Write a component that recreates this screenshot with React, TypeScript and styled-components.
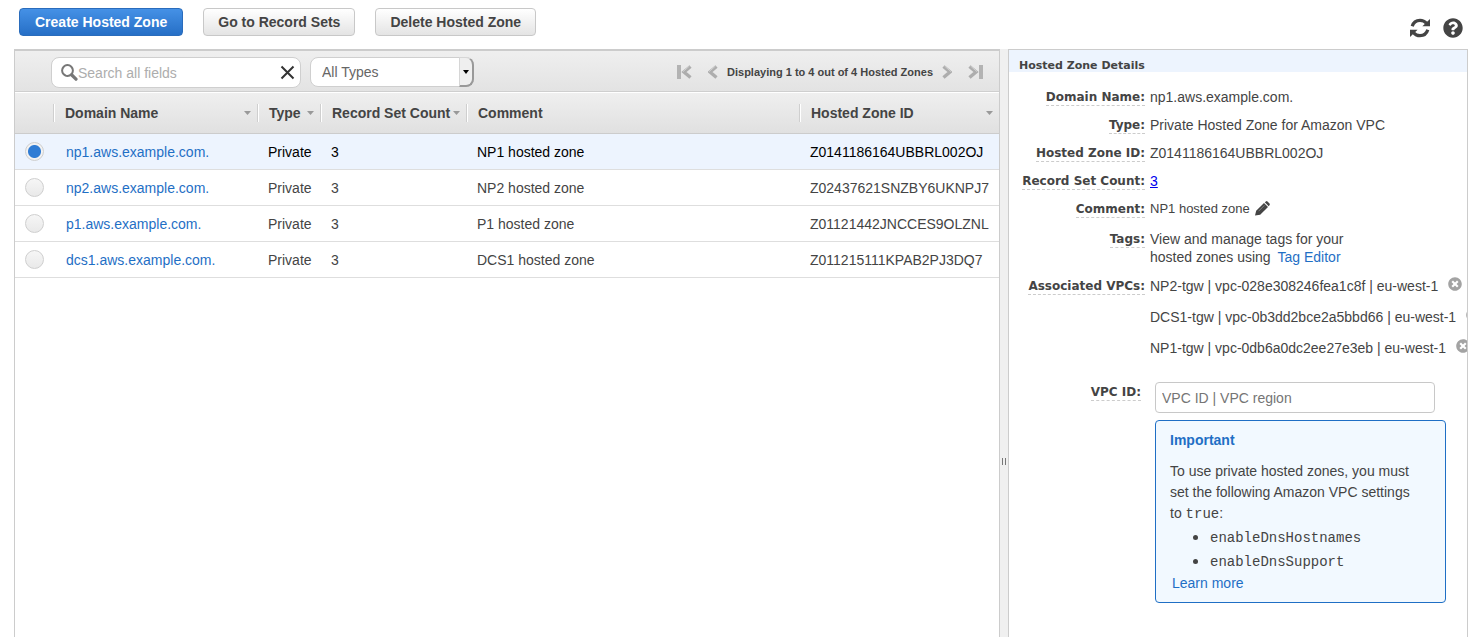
import React, { useState } from "react";
import styled, { createGlobalStyle, css } from "styled-components";
import { FaQuestionCircle, FaTimesCircle } from "react-icons/fa";

const colors = {
  text: "#444444",
  blue: "#1f6fc5",
  line: "#cccccc",
  pale: "#edf4fe",
};

const GlobalStyle = createGlobalStyle`
  *, *::before, *::after { box-sizing: border-box; }
  body {
    margin: 0;
    background: #fff;
    color: ${colors.text};
    font: 14px/18px "Liberation Sans", Arial, sans-serif;
  }
  button, input, select { font: inherit; color: inherit; }
`;

const Page = styled.div`
  display: flex;
  flex-direction: column;
  height: 100vh;
  overflow: hidden;
  padding: 0 12px 0 14px;
`;

const TopBar = styled.header`
  display: flex;
  justify-content: space-between;
  flex: none;
  height: 49px;
  padding: 8px 5px 0;
`;

const Actions = styled.div`
  display: flex;
  gap: 20px;
`;

const ActionButton = styled.button<{ $primary?: boolean }>`
  height: 28px;
  padding: 0 14px;
  border: 1px solid #c8c8c8;
  border-radius: 4px;
  background: linear-gradient(#ffffff, #e4e4e4);
  font-weight: bold;
  line-height: 26px;
  white-space: nowrap;
  ${(p) =>
    p.$primary &&
    css`
      padding: 0 15px;
      border-color: #2a6cbc;
      background: linear-gradient(#4591e6, #266fc6);
      color: #fff;
    `}
`;

const Tools = styled.div`
  display: flex;
  gap: 13px;
  padding-top: 10px;
`;

const IconButton = styled.button`
  display: inline-flex;
  flex: none;
  align-items: center;
  justify-content: center;
  height: 20px;
  padding: 0;
  border: 0;
  background: none;
`;

const Workspace = styled.div`
  display: flex;
  flex: 1;
  min-height: 0;
`;

const ListPanel = styled.section`
  flex: 1;
  min-width: 0;
  border: 1px solid ${colors.line};
  border-top-width: 2px;
  border-bottom: 0;
`;

const FilterBar = styled.div`
  display: flex;
  align-items: flex-start;
  height: 41px;
  padding: 6px 16px 0 36px;
  border-bottom: 1px solid #cfcfcf;
  background: linear-gradient(#efefef, #e3e3e3);
`;

const SearchBox = styled.div`
  display: flex;
  align-items: center;
  width: 250px;
  height: 31px;
  padding: 0 5px 0 9px;
  border: 1px solid #cfcfcf;
  border-radius: 8px;
  background: #fff;
`;

const SearchInput = styled.input`
  flex: 1;
  min-width: 0;
  padding: 0;
  border: 0;
  outline: 0;
  background: none;
  &::placeholder { color: #adadad; opacity: 1; }
`;

const TypeFilter = styled.div`
  display: flex;
  position: relative;
  width: 164px;
  height: 30px;
  margin-left: 9px;
`;

const TypeSelect = styled.select`
  appearance: none;
  width: 100%;
  padding: 0 20px 0 11px;
  border: 1px solid #cfcfcf;
  border-radius: 8px;
  background: #fff;
  color: #666;
`;

const SelectArrow = styled.span`
  position: absolute;
  top: 0;
  right: 0;
  bottom: 0;
  display: flex;
  align-items: center;
  justify-content: center;
  width: 15px;
  border: 1px solid #d6d6d6;
  border-right: 2px solid #999;
  border-bottom: 2px solid #999;
  border-radius: 0 8px 8px 0;
  background: #efefef;
  pointer-events: none;
`;

const Pager = styled.nav`
  display: flex;
  align-items: center;
  height: 29px;
  margin-left: auto;
  font-size: 11px;
  font-weight: bold;
  white-space: nowrap;
`;

const PagerGroup = styled.span`
  display: flex;
  gap: 16px;
  margin: 0 9px;
  &:last-child { margin-right: 0; }
`;

const ZoneTable = styled.table`
  width: 100%;
  table-layout: fixed;
  border-collapse: separate;
  border-spacing: 0;
`;

const HeadRow = styled.tr`
  height: 42px;
  background: linear-gradient(#ffffff 1px, #efefef 1px, #e0e0e0);
`;

const HeadCell = styled.th<{ $width?: number }>`
  width: ${(p) => (p.$width ? `${p.$width}px` : "auto")};
  padding: 0;
  border-bottom: 1px solid ${colors.line};
  text-align: left;
  white-space: nowrap;
`;

const HeadLabel = styled.div`
  display: flex;
  align-items: center;
  justify-content: space-between;
  height: 18px;
  padding: 0 6px 0 11px;
  border-left: 1px solid #cfcfcf;
  box-shadow: inset 1px 0 #fff;
`;

const Row = styled.tr<{ $selected: boolean }>`
  height: 36px;
  background: ${(p) => (p.$selected ? colors.pale : "#fff")};
  color: ${(p) => (p.$selected ? "#000" : colors.text)};
`;

const Cell = styled.td`
  padding: 0 0 0 11px;
  border-bottom: 1px solid #dedede;
  white-space: nowrap;
`;

const RadioCell = styled(Cell)`
  padding: 0;
`;

const NameCell = styled(Cell)`
  padding-left: 13px;
`;

const Radio = styled.input`
  display: block;
  appearance: none;
  width: 19px;
  height: 19px;
  margin: 0 auto;
  border: 1px solid #cfcfcf;
  border-radius: 50%;
  background: linear-gradient(#f6f6f6, #e9e9e9);
  &:checked {
    background: radial-gradient(circle, #2f7cd4 6px, #f2f2f2 7px);
  }
`;

const Link = styled.a`
  color: ${colors.blue};
  text-decoration: none;
`;

const CountLink = styled.a`
  color: #0000ee;
`;

const Splitter = styled.div`
  flex: none;
  width: 8px;
  padding: 409px 2px 0;
  background: #f0f0f0;
`;

const Grip = styled.span`
  display: block;
  width: 4px;
  height: 7px;
  border: solid #777;
  border-width: 0 1px;
`;

const DetailsPanel = styled.aside`
  flex: none;
  width: 460px;
  overflow: hidden;
  border: 1px solid ${colors.line};
  border-bottom: 0;
`;

const DetailsTitle = styled.h2`
  height: 22px;
  margin: 0 0 11px;
  padding: 7px 0 0 10px;
  background: ${colors.pale};
  font: bold 11px/18px "DejaVu Sans", Verdana, sans-serif;
`;

const Details = styled.dl`
  margin: 0;
`;

const DetailRow = styled.div`
  display: grid;
  grid-template-columns: 136px 1fr;
  align-items: start;
  column-gap: 5px;
  padding: 5px 0;
`;

const Term = styled.dt`
  display: flex;
  justify-content: flex-end;
  padding-top: 1px;
`;

const TermText = styled.span`
  border-bottom: 1px dashed ${colors.line};
  font: bold 12px/16px "DejaVu Sans", Verdana, sans-serif;
  white-space: nowrap;
`;

const Value = styled.dd<{ $small?: boolean }>`
  display: flex;
  gap: 5px;
  margin: 0;
  font-size: ${(p) => (p.$small ? "13px" : "14px")};
  white-space: nowrap;
`;

const TagsText = styled.dd`
  max-width: 210px;
  margin: 0;
  padding-bottom: 1px;
`;

const TagLink = styled(Link)`
  margin-left: 3px;
`;

const VpcList = styled.ul`
  display: grid;
  row-gap: 13px;
  margin: 0;
  padding: 0;
  list-style: none;
`;

const VpcItem = styled.li`
  display: flex;
  gap: 10px;
  white-space: nowrap;
`;

const EditButton = styled(IconButton)`
  padding-bottom: 3px;
`;

const RemoveButton = styled(IconButton)`
  height: 14px;
  color: #a3a3a3;
`;

const VpcForm = styled.form`
  display: grid;
  grid-template-columns: 132px 1fr;
  align-items: start;
  column-gap: 14px;
  padding: 20px 21px 0 0;
`;

const VpcLabel = styled.label`
  display: flex;
  justify-content: flex-end;
  padding-top: 2px;
`;

const VpcInput = styled.input`
  display: block;
  width: 280px;
  height: 31px;
  padding: 0 6px;
  border: 1px solid #c8c8c8;
  border-radius: 4px;
  &::placeholder { color: #757575; opacity: 1; }
`;

const Notice = styled.section`
  margin-top: 7px;
  padding: 9px 14px 8px;
  border: 1px solid ${colors.blue};
  border-radius: 4px;
  background: #f2f9ff;
  line-height: 21px;
`;

const NoticeTitle = styled.h3`
  margin: 0 0 10px;
  color: ${colors.blue};
  font-size: 14px;
`;

const NoticeText = styled.p`
  margin: 0;
  padding-right: 10px;
`;

const Code = styled.code`
  font-family: "Liberation Mono", "Courier New", monospace;
  font-size: 14px;
  line-height: 1;
`;

const NoticeList = styled.ul`
  margin: 1px 0 0;
  padding: 0 0 0 40px;
  line-height: 23px;
  li::marker { font-size: 18px; }
`;

const LearnMore = styled(Link)`
  display: block;
  margin-left: 2px;
`;

const RefreshIcon = () => (
  <svg width="20" height="20" viewBox="0 0 20 20" fill="currentColor" aria-hidden="true">
    <path d="M2.200 8.200C3.300 4.600 6.400 2.300 10 2.300c2.600 0 4.900 1.100 6.400 3" fill="none" stroke="currentColor" strokeWidth="3.200" />
    <path d="M20 1v7.300h-7.600z" />
    <path d="M17.800 11.800C16.700 15.400 13.600 17.700 10 17.700c-2.600 0-4.900-1.100-6.400-3" fill="none" stroke="currentColor" strokeWidth="3.200" />
    <path d="M0 19v-7.300h7.600z" />
  </svg>
);

const PencilIcon = () => (
  <svg width="15" height="15" viewBox="0 0 15 15" fill="currentColor" aria-hidden="true">
    <path d="M0 14.500L1.200 9.800L9 2L13 6L5.200 13.800Z" />
    <path d="M9.800 1.300L10.900 0.400Q11.700 -0.200 12.500 0.500L14.500 2.500Q15.200 3.300 14.600 4.100L13.700 5.200Z" />
    <path d="M3.600 10.200L9.400 4.400" stroke="#999" strokeWidth="0.700" />
  </svg>
);

const SearchIcon = () => (
  <svg width="17" height="18" viewBox="0 0 17 18" fill="none" stroke="#777" aria-hidden="true">
    <circle cx="6.500" cy="6.500" r="5.400" strokeWidth="2" />
    <path d="M10.800 11l4.200 4.200" strokeWidth="3.200" strokeLinecap="round" />
  </svg>
);

const ClearIcon = () => (
  <svg width="15" height="15" viewBox="0 0 15 15" fill="none" stroke="#333" strokeWidth="2" aria-hidden="true">
    <path d="M1.500 1.500l12 12M13.500 1.500l-12 12" />
  </svg>
);

const SortIcon = () => (
  <svg width="7" height="4" viewBox="0 0 7 4" fill="#999" aria-hidden="true">
    <path d="M0 0h7L3.500 4z" />
  </svg>
);

const PageIcon = ({ bar, flip }: { bar?: boolean; flip?: boolean }) => (
  <svg width={bar ? 15 : 10} height="14" viewBox={bar ? "0 0 15 14" : "5 0 10 14"} aria-hidden="true">
    <g transform={flip ? (bar ? "translate(15 0) scale(-1 1)" : "translate(20 0) scale(-1 1)") : undefined} fill="none">
      {bar && <path d="M2 0v14" stroke="#b3b3b3" strokeWidth="4" />}
      <path d="M13.500 1.500L7 7l6.500 5.500" stroke="#adadad" strokeWidth="3.400" />
      <path d="M12.500 1L6 6.700" stroke="#cfcfcf" strokeWidth="1" />
    </g>
  </svg>
);

const zones = [
  { name: "np1.aws.example.com.", comment: "NP1 hosted zone", id: "Z0141186164UBBRL002OJ" },
  { name: "np2.aws.example.com.", comment: "NP2 hosted zone", id: "Z02437621SNZBY6UKNPJ7" },
  { name: "p1.aws.example.com.", comment: "P1 hosted zone", id: "Z01121442JNCCES9OLZNL" },
  { name: "dcs1.aws.example.com.", comment: "DCS1 hosted zone", id: "Z011215111KPAB2PJ3DQ7" },
];

const columns = [
  { label: "Domain Name", width: 204, sortable: true },
  { label: "Type", width: 63, sortable: true },
  { label: "Record Set Count", width: 146, sortable: true },
  { label: "Comment", sortable: false },
  { label: "Hosted Zone ID", width: 200, sortable: true },
];

const vpcs = [
  "NP2-tgw | vpc-028e308246fea1c8f | eu-west-1",
  "DCS1-tgw | vpc-0b3dd2bce2a5bbd66 | eu-west-1",
  "NP1-tgw | vpc-0db6a0dc2ee27e3eb | eu-west-1",
];

export default function App() {
  const [selected, setSelected] = useState(0);
  const [query, setQuery] = useState("");
  const zone = zones[selected];

  return (
    <Page>
      <GlobalStyle />
      <TopBar>
        <Actions>
          <ActionButton $primary>Create Hosted Zone</ActionButton>
          <ActionButton>Go to Record Sets</ActionButton>
          <ActionButton>Delete Hosted Zone</ActionButton>
        </Actions>
        <Tools>
          <IconButton aria-label="Refresh"><RefreshIcon /></IconButton>
          <IconButton aria-label="Help"><FaQuestionCircle size={20} /></IconButton>
        </Tools>
      </TopBar>

      <Workspace>
        <ListPanel>
          <FilterBar>
            <SearchBox>
              <SearchIcon />
              <SearchInput
                aria-label="Search all fields"
                placeholder="Search all fields"
                value={query}
                onChange={(e) => setQuery(e.target.value)}
              />
              <IconButton aria-label="Clear search" onClick={() => setQuery("")}><ClearIcon /></IconButton>
            </SearchBox>
            <TypeFilter>
              <TypeSelect aria-label="Zone type">
                <option>All Types</option>
              </TypeSelect>
              <SelectArrow>
                <svg width="6" height="4" viewBox="0 0 6 4" aria-hidden="true"><path d="M0 0h6L3 4z" /></svg>
              </SelectArrow>
            </TypeFilter>
            <Pager aria-label="Pages">
              <PagerGroup>
                <IconButton aria-label="First page"><PageIcon bar /></IconButton>
                <IconButton aria-label="Previous page"><PageIcon /></IconButton>
              </PagerGroup>
              Displaying 1 to 4 out of 4 Hosted Zones
              <PagerGroup>
                <IconButton aria-label="Next page"><PageIcon flip /></IconButton>
                <IconButton aria-label="Last page"><PageIcon bar flip /></IconButton>
              </PagerGroup>
            </Pager>
          </FilterBar>

          <ZoneTable>
            <thead>
              <HeadRow>
                <HeadCell $width={38} aria-label="Selection" />
                {columns.map((c) => (
                  <HeadCell key={c.label} $width={c.width} scope="col">
                    <HeadLabel>
                      {c.label}
                      {c.sortable && <SortIcon />}
                    </HeadLabel>
                  </HeadCell>
                ))}
              </HeadRow>
            </thead>
            <tbody>
              {zones.map((z, i) => (
                <Row key={z.id} $selected={i === selected}>
                  <RadioCell>
                    <Radio
                      type="radio"
                      name="zone"
                      aria-label={z.name}
                      checked={i === selected}
                      onChange={() => setSelected(i)}
                    />
                  </RadioCell>
                  <NameCell><Link href="#">{z.name}</Link></NameCell>
                  <Cell>Private</Cell>
                  <Cell>3</Cell>
                  <Cell>{z.comment}</Cell>
                  <Cell>{z.id}</Cell>
                </Row>
              ))}
            </tbody>
          </ZoneTable>
        </ListPanel>

        <Splitter>
          <Grip />
        </Splitter>

        <DetailsPanel>
          <DetailsTitle>Hosted Zone Details</DetailsTitle>
          <Details>
            <DetailRow>
              <Term><TermText>Domain Name:</TermText></Term>
              <Value>{zone.name}</Value>
            </DetailRow>
            <DetailRow>
              <Term><TermText>Type:</TermText></Term>
              <Value>Private Hosted Zone for Amazon VPC</Value>
            </DetailRow>
            <DetailRow>
              <Term><TermText>Hosted Zone ID:</TermText></Term>
              <Value>{zone.id}</Value>
            </DetailRow>
            <DetailRow>
              <Term><TermText>Record Set Count:</TermText></Term>
              <Value><CountLink href="#">3</CountLink></Value>
            </DetailRow>
            <DetailRow>
              <Term><TermText>Comment:</TermText></Term>
              <Value $small>
                {zone.comment}
                <EditButton aria-label="Edit comment"><PencilIcon /></EditButton>
              </Value>
            </DetailRow>
            <DetailRow>
              <Term><TermText>Tags:</TermText></Term>
              <TagsText>
                View and manage tags for your hosted zones using <TagLink href="#">Tag Editor</TagLink>
              </TagsText>
            </DetailRow>
            <DetailRow>
              <Term><TermText>Associated VPCs:</TermText></Term>
              <Value>
                <VpcList>
                  {vpcs.map((v) => (
                    <VpcItem key={v}>
                      {v}
                      <RemoveButton aria-label={`Remove ${v}`}><FaTimesCircle size={14} /></RemoveButton>
                    </VpcItem>
                  ))}
                </VpcList>
              </Value>
            </DetailRow>
          </Details>
          <VpcForm onSubmit={(e) => e.preventDefault()}>
            <VpcLabel htmlFor="vpc"><TermText>VPC ID:</TermText></VpcLabel>
            <div>
              <VpcInput id="vpc" placeholder="VPC ID | VPC region" />
              <Notice>
                <NoticeTitle>Important</NoticeTitle>
                <NoticeText>
                  To use private hosted zones, you must set the following Amazon VPC settings to <Code>true</Code>:
                </NoticeText>
                <NoticeList>
                  <li><Code>enableDnsHostnames</Code></li>
                  <li><Code>enableDnsSupport</Code></li>
                </NoticeList>
                <LearnMore href="#">Learn more</LearnMore>
              </Notice>
            </div>
          </VpcForm>
        </DetailsPanel>
      </Workspace>
    </Page>
  );
}
